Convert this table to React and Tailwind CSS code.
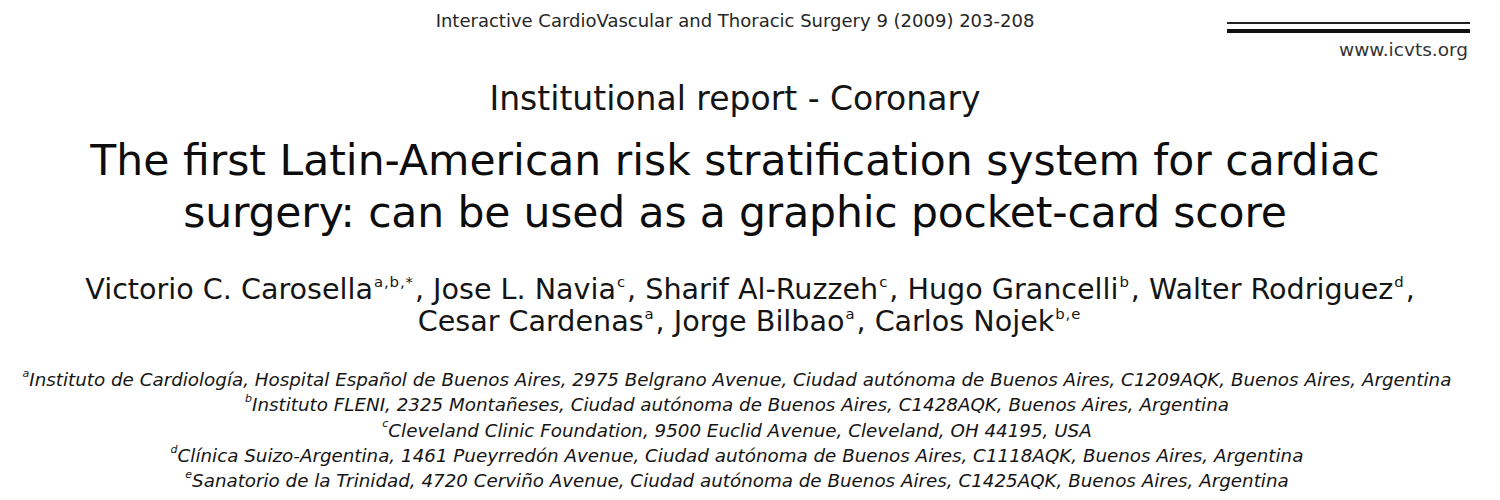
import React from "react";

const Sup = ({ children }) => (
  <sup className="text-[0.52em] align-[0.32em] leading-none tracking-[0.06em] pl-[1px] pr-[1px]">{children}</sup>
);

const affiliations = [
  ["a", "Instituto de Cardiología, Hospital Español de Buenos Aires, 2975 Belgrano Avenue, Ciudad autónoma de Buenos Aires, C1209AQK, Buenos Aires, Argentina"],
  ["b", "Instituto FLENI, 2325 Montañeses, Ciudad autónoma de Buenos Aires, C1428AQK, Buenos Aires, Argentina"],
  ["c", "Cleveland Clinic Foundation, 9500 Euclid Avenue, Cleveland, OH 44195, USA"],
  ["d", "Clínica Suizo-Argentina, 1461 Pueyrredón Avenue, Ciudad autónoma de Buenos Aires, C1118AQK, Buenos Aires, Argentina"],
  ["e", "Sanatorio de la Trinidad, 4720 Cerviño Avenue, Ciudad autónoma de Buenos Aires, C1425AQK, Buenos Aires, Argentina"],
];

export default function App() {
  return (
    <div className="w-[1500px] h-[500px] bg-white overflow-hidden text-[#151515] font-['DejaVu_Sans',sans-serif]">
      <div className="w-[1470px]">
        {/* journal header */}
        <div className="grid grid-cols-[1fr_auto_1fr] items-start pt-[10px]">
          <div />
          <p className="text-[18px] leading-[22px] text-[#262626]">
            Interactive CardioVascular and Thoracic Surgery 9 (2009) 203-208
          </p>
          <div className="flex flex-col items-end pt-[12px]">
            <div className="w-[243px] h-[2px] bg-[#222]" />
            <div className="w-[243px] h-[4px] bg-[#111] mt-[5px]" />
          </div>
        </div>
        <p className="text-right pr-[2px] text-[18.5px] leading-[22px] mt-[6px] text-[#333]">
          www.icvts.org
        </p>

        <h2 className="text-center text-[33px] leading-[40px] mt-[18px]">
          Institutional report - Coronary
        </h2>

        <h1 className="text-center text-[42.5px] leading-[52px] mt-[16px] text-[#0d0d0d]">
          The first Latin-American risk stratification system for cardiac
          <br />
          <span className="tracking-[-0.15px]">surgery: can be used as a graphic pocket-card score</span>
        </h1>

        <p className="text-center text-[28.6px] leading-[32px] mt-[34px] pl-[30px]">
          Victorio C. Carosella<Sup>a,b,*</Sup>, Jose L. Navia<Sup>c</Sup>, Sharif Al-Ruzzeh<Sup>c</Sup>, Hugo Grancelli<Sup>b</Sup>, Walter Rodriguez<Sup>d</Sup>,
          <br />
          Cesar Cardenas<Sup>a</Sup>, Jorge Bilbao<Sup>a</Sup>, Carlos Nojek<Sup>b,e</Sup>
        </p>

        <div className="text-center italic text-[18.3px] leading-[25.3px] mt-[30px] pl-[4px]">
          {affiliations.map(([k, t]) => (
            <p key={k}>
              <sup className="text-[0.6em] align-[0.35em] leading-none">{k}</sup>
              {t}
            </p>
          ))}
        </div>
      </div>
    </div>
  );
}
